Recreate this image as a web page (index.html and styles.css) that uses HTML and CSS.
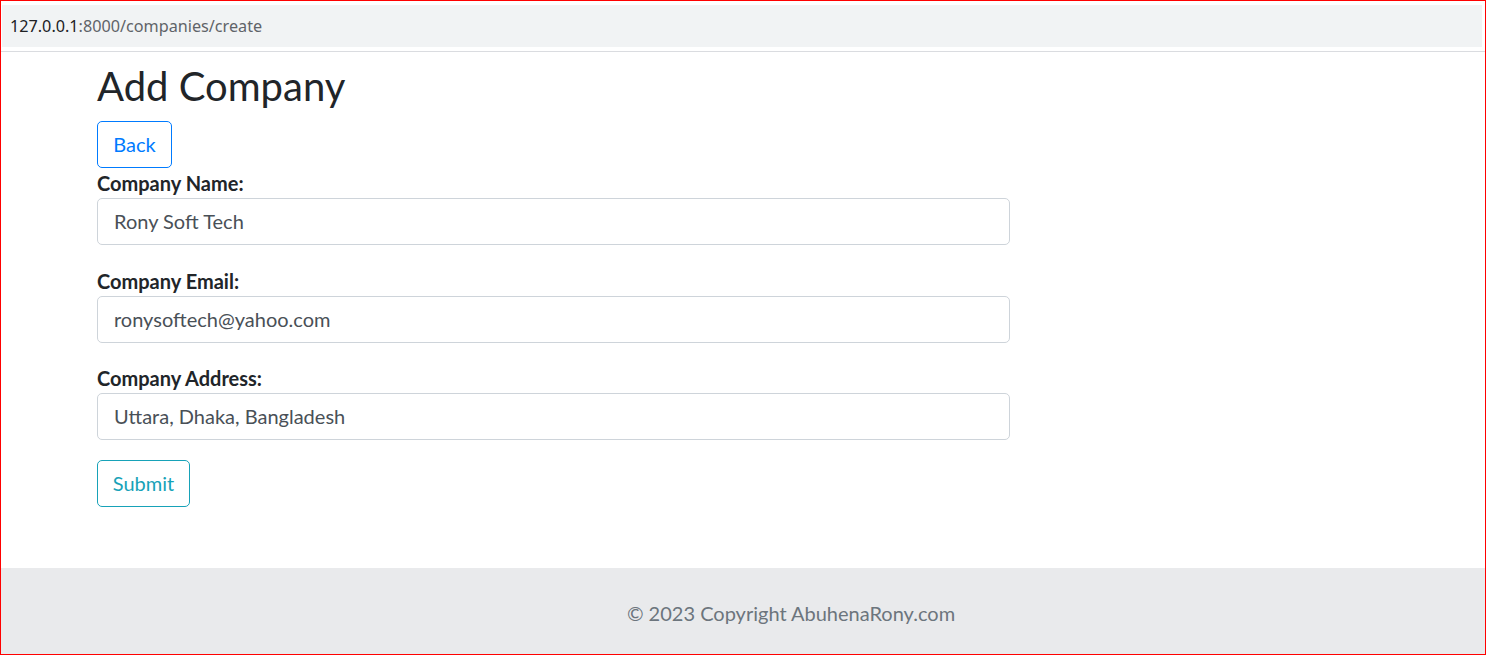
FILE: index.html
```html
<!DOCTYPE html>
<html lang="en">
<head>
<meta charset="utf-8">
<title>Add Company</title>
<link rel="stylesheet" href="styles.css">
</head>
<body>
<div class="frame">
  <div class="addressbar">
    <span class="host">127.0.0.1</span><span class="path">:8000/companies/create</span>
  </div>
  <div class="divider"></div>
  <main class="content">
    <h1 class="title">Add Company</h1>
    <a class="btn btn-back" href="#">Back</a>
    <form class="form">
      <div class="group">
        <label class="label">Company Name:</label>
        <input class="input" type="text" value="Rony Soft Tech">
      </div>
      <div class="group">
        <label class="label">Company Email:</label>
        <input class="input" type="text" value="ronysoftech@yahoo.com">
      </div>
      <div class="group">
        <label class="label">Company Address:</label>
        <input class="input" type="text" value="Uttara, Dhaka, Bangladesh">
      </div>
      <button class="btn btn-submit" type="button">Submit</button>
    </form>
  </main>
  <footer class="footer">
    <span class="footer-text">© 2023 Copyright AbuhenaRony.com</span>
  </footer>
</div>
</body>
</html>
```

FILE: styles.css
```css
html, body {
  margin: 0;
  padding: 0;
  background: #ffffff;
}

.frame {
  box-sizing: border-box;
  width: 1486px;
  height: 655px;
  border: 1px solid #ff0000;
  display: flex;
  flex-direction: column;
  font-family: Lato, "Open Sans", sans-serif;
  color: #212529;
  overflow: hidden;
}

.addressbar {
  margin: 4px 3px 0 1px;
  height: 42px;
  background: #f1f3f4;
  display: flex;
  align-items: center;
  padding-left: 8px;
  font-family: "Noto Sans", "Open Sans", sans-serif;
  font-size: 16.2px;
}

.host {
  color: #202124;
}

.path {
  color: #5f6368;
}

.divider {
  margin-top: 4px;
  height: 1px;
  background: #dadce0;
}

.content {
  padding-left: 96px;
}

.title {
  margin: 10px 0 11px 0;
  font-size: 40px;
  font-weight: 400;
  line-height: 48px;
  color: #212529;
}

.btn {
  display: block;
  box-sizing: border-box;
  height: 47px;
  font-family: Lato, sans-serif;
  font-size: 20px;
  line-height: 30px;
  padding: 7px 0 8px 0;
  text-align: center;
  border-radius: 5px;
  background: transparent;
  text-decoration: none;
  cursor: pointer;
}

.btn-back {
  width: 75px;
  color: #007bff;
  border: 1px solid #007bff;
}

.btn-submit {
  width: 93px;
  color: #17a2b8;
  border: 1px solid #17a2b8;
  margin-top: 1px;
}

.form {
  margin: 0;
}

.group {
  margin-bottom: 20px;
  display: flex;
  flex-direction: column;
  align-items: flex-start;
}

.group:first-child {
  margin-bottom: 21px;
}

.label {
  font-size: 20px;
  line-height: 30px;
  font-weight: 700;
  color: #212529;
}

.input {
  box-sizing: border-box;
  width: 913px;
  height: 47px;
  padding: 7px 16px 8px 16px;
  font-family: Lato, sans-serif;
  font-size: 20px;
  line-height: 30px;
  color: #495057;
  border: 1px solid #ced4da;
  border-radius: 5px;
  background: #ffffff;
  outline: none;
}

.footer {
  margin-top: auto;
  height: 86px;
  box-sizing: border-box;
  background: #e9eaec;
  padding: 30px 0 0 96px;
  text-align: center;
}

.footer-text {
  font-size: 20px;
  line-height: 30px;
  color: #6c757d;
}
```
